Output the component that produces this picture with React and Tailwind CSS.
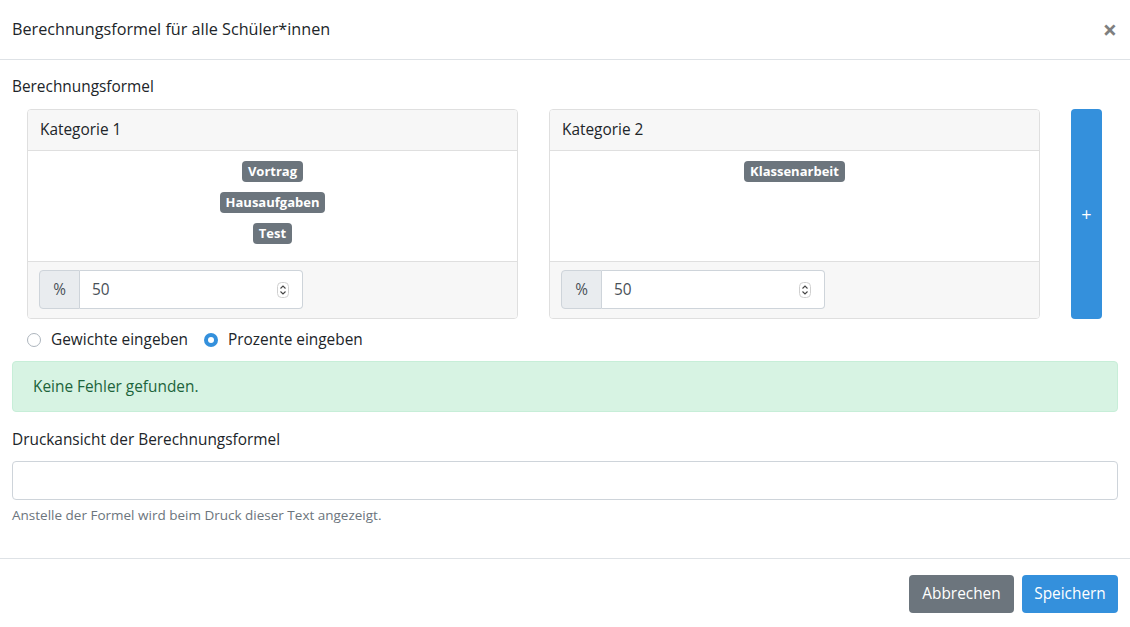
import React from "react";

function Spinner() {
  return (
    <svg width="12" height="16" viewBox="0 0 12 16" className="absolute right-[13px] top-1/2 -translate-y-1/2">
      <rect x="0.5" y="0.5" width="11" height="15" rx="4" fill="#fff" stroke="#d0d0d0" />
      <path d="M3.5 6.5 L6 4 L8.5 6.5" fill="none" stroke="#444" strokeWidth="1.1" />
      <path d="M3.5 9.5 L6 12 L8.5 9.5" fill="none" stroke="#444" strokeWidth="1.1" />
    </svg>
  );
}

function Badge({ children }) {
  return (
    <span className="inline-block bg-[#6c757d] text-white font-bold text-[13px] leading-[13px] px-[6px] py-[4px] rounded-[4px]">
      {children}
    </span>
  );
}

function Card({ title, badges }) {
  return (
    <div className="w-[491px] border border-[#dfdfdf] rounded-[4px] flex flex-col overflow-hidden">
      <div className="h-[41px] bg-[#f7f7f7] border-b border-[#dfdfdf] flex items-center px-[12px] text-[15.4px] text-[#212529]">
        {title}
      </div>
      <div className="h-[110px] bg-white flex flex-col items-center pt-[10px] gap-[10px]">
        {badges.map((b) => (
          <Badge key={b}>{b}</Badge>
        ))}
      </div>
      <div className="h-[57px] bg-[#f7f7f7] border-t border-[#dfdfdf] px-[11px] pt-[8px]">
        <div className="flex w-[264px] h-[39px]">
          <div className="w-[41px] bg-[#e9ecef] border border-[#ced4da] rounded-l-[4px] flex items-center justify-center text-[15.4px] text-[#495057]">
            %
          </div>
          <div className="relative flex-1 bg-white border border-[#ced4da] border-l-0 rounded-r-[4px] flex items-center pl-[12px] text-[15.4px] text-[#495057]">
            50
            <Spinner />
          </div>
        </div>
      </div>
    </div>
  );
}

export default function App() {
  return (
    <div className="w-[1130px] h-[627px] bg-white font-['Open_Sans',sans-serif] text-[#212529] flex flex-col">
      <div className="h-[60px] border-b border-[#dee2e6] flex items-center justify-between pl-[12px] pr-[13px] shrink-0">
        <div className="text-[16.2px]">Berechnungsformel für alle Schüler*innen</div>
        <div className="text-[25px] font-bold text-[#7f7f7f] leading-none">×</div>
      </div>
      <div className="px-[12px] pt-[16px] flex-1">
        <div className="text-[15.4px] leading-[21px] mb-[12px]">Berechnungsformel</div>
        <div className="flex pl-[15px] pr-[15px] gap-[31px]">
          <Card title="Kategorie 1" badges={["Vortrag", "Hausaufgaben", "Test"]} />
          <Card title="Kategorie 2" badges={["Klassenarbeit"]} />
          <div className="w-[31px] h-[210px] bg-[#3490dc] rounded-[4px] flex items-center justify-center text-white text-[18px]">
            +
          </div>
        </div>
        <div className="flex items-center pl-[15px] h-[42px] text-[15.4px]">
          <div className="flex items-center mr-[16px]">
            <span className="w-[14px] h-[14px] rounded-full border border-[#adb5bd] bg-white mr-[10px]" />
            Gewichte eingeben
          </div>
          <div className="flex items-center">
            <span className="w-[14px] h-[14px] rounded-full bg-[#3490dc] flex items-center justify-center mr-[10px]">
              <span className="w-[6px] h-[6px] rounded-full bg-white" />
            </span>
            Prozente eingeben
          </div>
        </div>
        <div className="h-[51px] bg-[#d7f3e3] border border-[#c7eed8] rounded-[4px] flex items-center px-[20px] text-[15.4px] text-[#1d643b]">
          Keine Fehler gefunden.
        </div>
        <div className="text-[15.4px] leading-[21px] mt-[17px] mb-[11px]">Druckansicht der Berechnungsformel</div>
        <div className="h-[39px] border border-[#ced4da] rounded-[4px] bg-white" />
        <div className="text-[13.5px] text-[#6c757d] mt-[5px]">Anstelle der Formel wird beim Druck dieser Text angezeigt.</div>
      </div>
      <div className="h-[69px] border-t border-[#dee2e6] flex items-start justify-end pt-[16px] pr-[12px] gap-[8px] shrink-0">
        <div className="h-[38px] w-[105px] bg-[#6c757d] rounded-[4px] text-white text-[15.4px] flex items-center justify-center">
          Abbrechen
        </div>
        <div className="h-[38px] w-[96px] bg-[#3490dc] rounded-[4px] text-white text-[15.4px] flex items-center justify-center">
          Speichern
        </div>
      </div>
    </div>
  );
}
